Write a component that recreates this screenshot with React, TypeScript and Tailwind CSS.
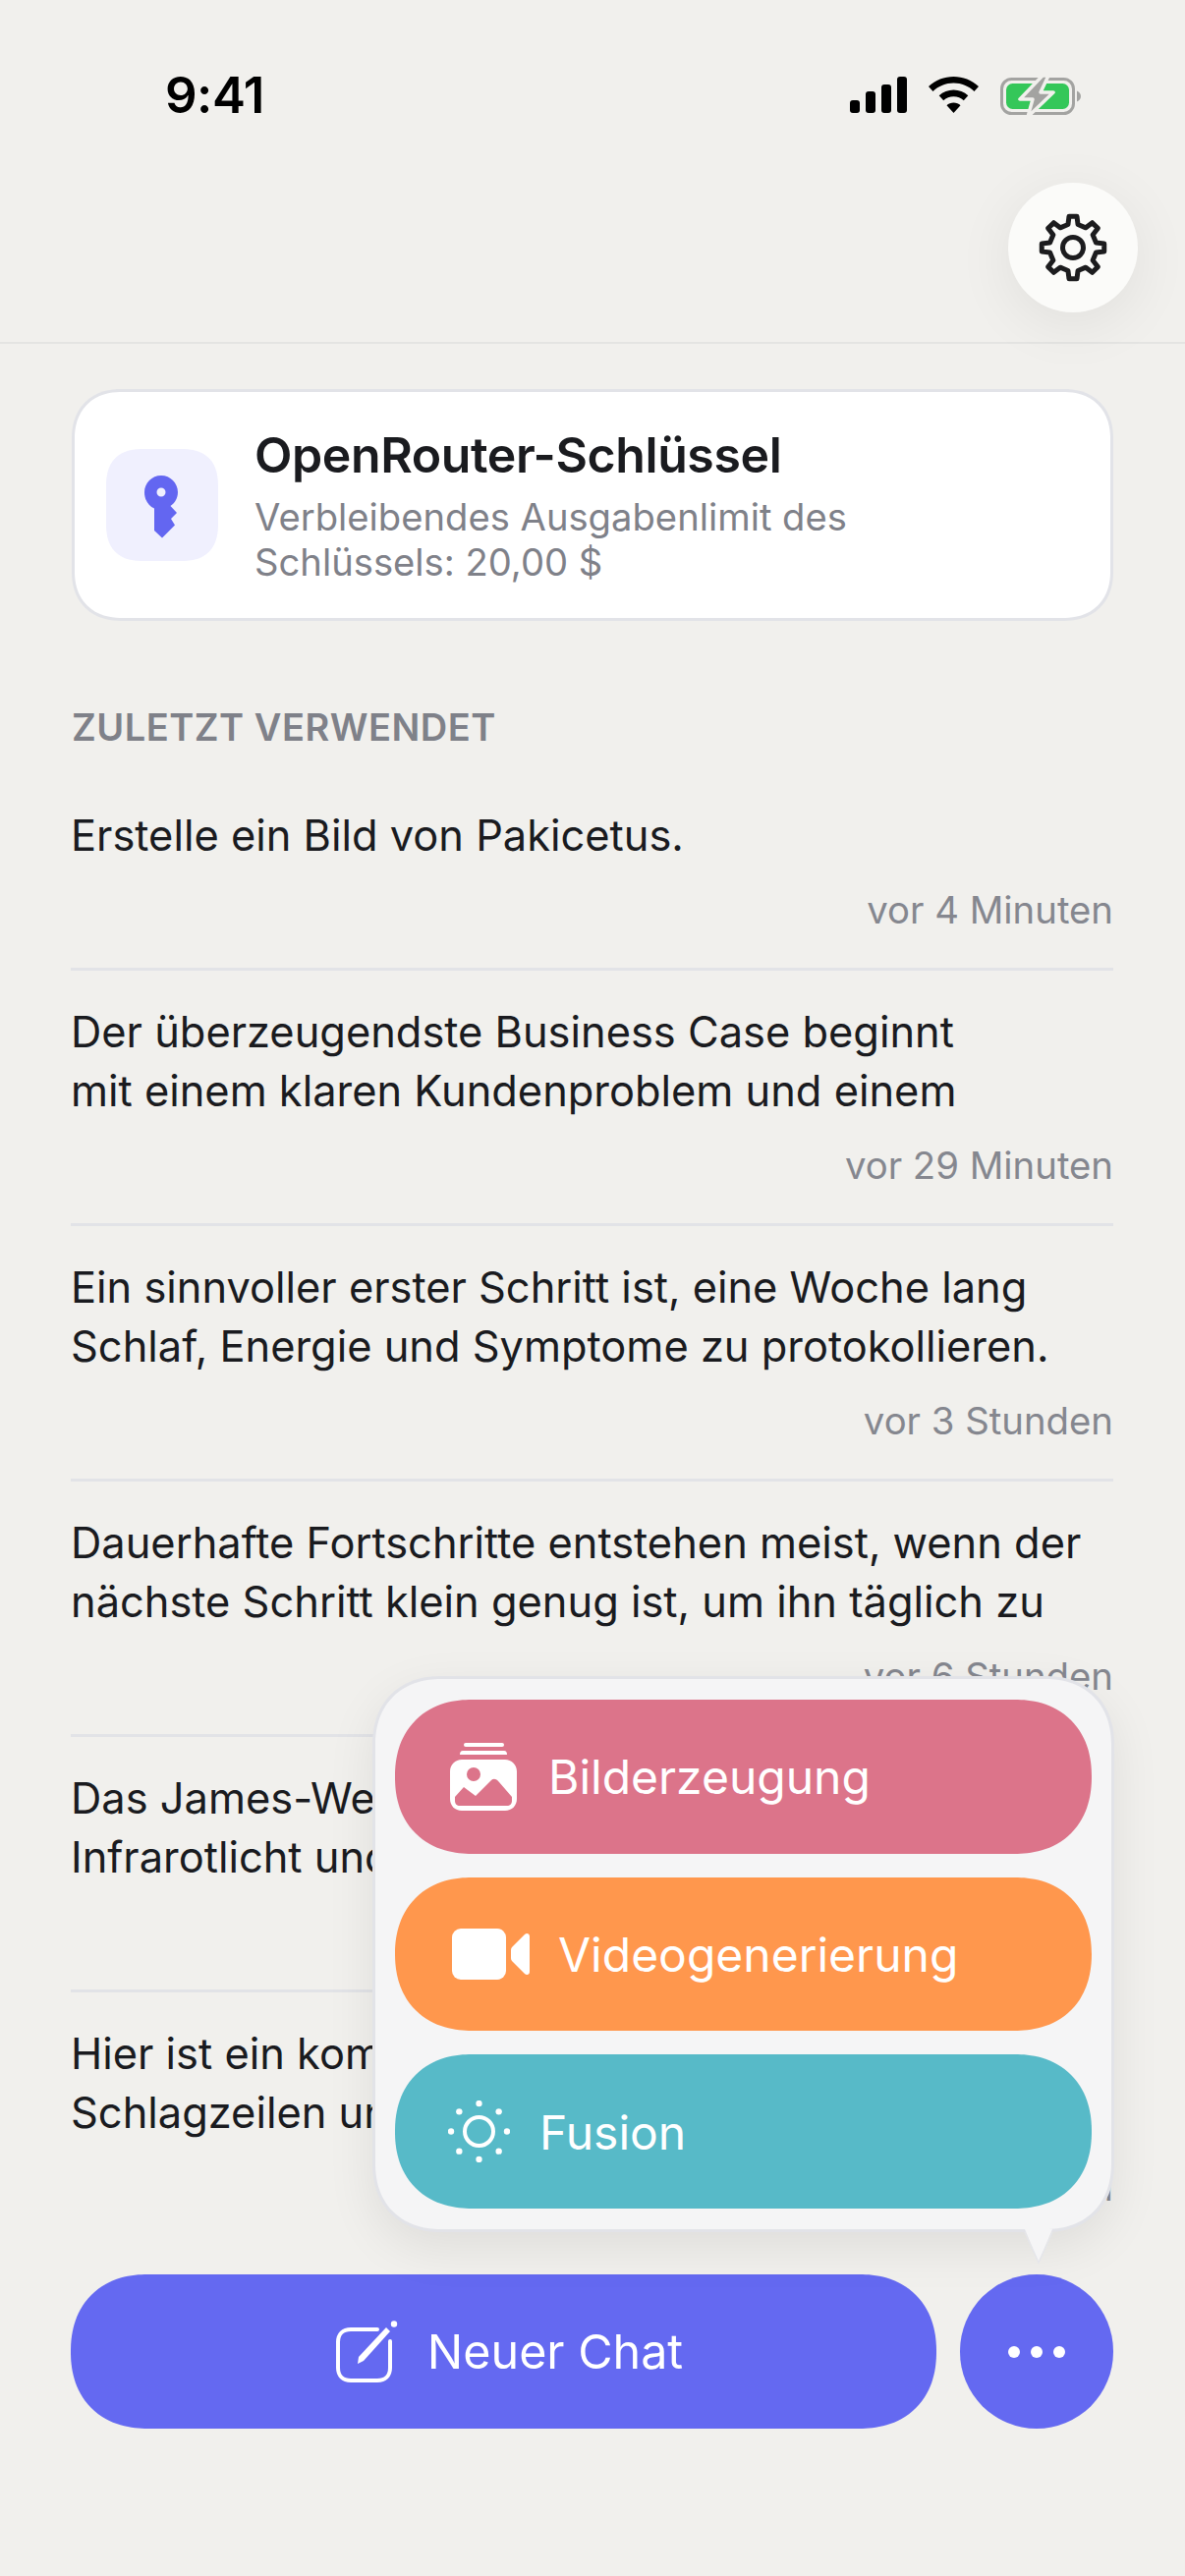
import React from "react";

const rows = [
  { lines: ["Erstelle ein Bild von Pakicetus."], time: "vor 4 Minuten" },
  { lines: ["Der überzeugendste Business Case beginnt", "mit einem klaren Kundenproblem und einem"], time: "vor 29 Minuten" },
  { lines: ["Ein sinnvoller erster Schritt ist, eine Woche lang", "Schlaf, Energie und Symptome zu protokollieren."], time: "vor 3 Stunden" },
  { lines: ["Dauerhafte Fortschritte entstehen meist, wenn der", "nächste Schritt klein genug ist, um ihn täglich zu"], time: "vor 6 Stunden" },
  { lines: ["Das James-Webb-Teleskop beobachtet das All im", "Infrarotlicht und blickt so weit zurück in die Zeit"], time: "vor 9 Stunden" },
  { lines: ["Hier ist ein kompakter Überblick über die heutigen", "Schlagzeilen und die wichtigsten Entwicklungen"], time: "vor 12 Stunden" },
];

function gearPath() {
  const cx = 40, cy = 40, n = 8;
  const ro = 32, ri = 24;
  const pts: string[] = [];
  for (let i = 0; i < n; i++) {
    const a = (i * 2 * Math.PI) / n - Math.PI / 2;
    const step = (2 * Math.PI) / n;
    const seq: [number, number][] = [
      [ri, a - step * 0.27],
      [ro, a - step * 0.16],
      [ro, a + step * 0.16],
      [ri, a + step * 0.27],
    ];
    for (const [r, t] of seq) pts.push(`${(cx + r * Math.cos(t)).toFixed(2)} ${(cy + r * Math.sin(t)).toFixed(2)}`);
  }
  return "M" + pts.join("L") + "Z";
}

function Signal() {
  return (
    <svg width="58" height="37" viewBox="0 0 58 37" fill="#000">
      <rect x="0" y="24" width="10" height="13" rx="3" />
      <rect x="16" y="15" width="10" height="22" rx="3" />
      <rect x="32" y="8" width="10" height="29" rx="3" />
      <rect x="48" y="0" width="10" height="37" rx="3" />
    </svg>
  );
}

function Wifi() {
  return (
    <svg width="51" height="37" viewBox="0 0 51 37" fill="#000">
      <path d="M25.5 0C35 0 44 3.600 51 10L46.500 15C40.800 9.700 33.400 6.600 25.500 6.600C17.600 6.600 10.200 9.700 4.500 15L0 10C7 3.600 16 0 25.500 0Z" />
      <path d="M25.500 13.500C31 13.500 36.300 15.600 40.300 19.300L35.800 24.200C33 21.700 29.400 20.200 25.500 20.200C21.600 20.200 18 21.700 15.200 24.200L10.700 19.300C14.700 15.600 20 13.500 25.500 13.500Z" />
      <path d="M25.500 26.500C28.300 26.500 30.700 27.500 32.500 29.200L25.500 37L18.500 29.200C20.300 27.500 22.700 26.500 25.500 26.500Z" />
    </svg>
  );
}

function Battery() {
  return (
    <svg width="82" height="40" viewBox="0 0 82 40">
      <rect x="1.500" y="2.500" width="73" height="35" rx="10" fill="none" stroke="#a3a3a1" strokeWidth="3" />
      <rect x="6" y="7" width="64" height="26" rx="6.500" fill="#34c759" />
      <path d="M78 14.500C80.500 15.500 82 17.500 82 20C82 22.500 80.500 24.500 78 25.500Z" fill="#a3a3a1" />
      <path d="M43 -1L20 23H33L28 41L54 16H41L49 -1Z" fill="#a3a3a1" stroke="#f1f0ed" strokeWidth="3.500" strokeLinejoin="round" />
    </svg>
  );
}

function Gear() {
  return (
    <svg width="80" height="80" viewBox="0 0 80 80" fill="none" stroke="#1c1c1e" strokeWidth="5" strokeLinejoin="round">
      <path d={gearPath()} />
      <circle cx="40" cy="40" r="10.500" />
    </svg>
  );
}

function KeyIcon() {
  return (
    <svg className="mt-[5px]" width="36" height="66" viewBox="0 0 36 66" fill="#6366f1">
      <path fillRule="evenodd" d="M17 0C26.400 0 34 7.600 34 17C34 23 31 28 26.500 31L33 38L27 44L31 50.500L18 63.500L10 56V33.500C4 31 0 24.500 0 17C0 7.600 7.600 0 17 0ZM17 12.500A4.500 4.500 0 1 0 17 21.500A4.500 4.500 0 1 0 17 12.500Z" />
    </svg>
  );
}

function ImagesIcon() {
  return (
    <svg width="68" height="71" viewBox="0 0 68 71" fill="#fff">
      <rect x="14" y="1" width="41" height="4" rx="2" />
      <path d="M10 13C10 10.500 11 9 13 9H55C57 9 58 10.500 58 13Z" />
      <path
        fillRule="evenodd"
        d="M12 18H56C62.600 18 68 23.400 68 30V58C68 65 63 70 56 70H12C5 70 0 65 0 58V30C0 23.400 5.400 18 12 18ZM24 26A7 7 0 1 0 24 40A7 7 0 1 0 24 26ZM42 39L26 55L14 46L5 56V60C5 63 7 65 10 65H58C61 65 63 63 63 60V56L50 41C47 37 44 37 42 39Z"
      />
    </svg>
  );
}

function VideoIcon() {
  return (
    <svg width="79" height="52" viewBox="0 0 79 52" fill="#fff">
      <rect x="0" y="0" width="55" height="52" rx="9" />
      <path d="M60 22C60 20.500 60.500 19.500 61.500 18.500L74 6C76 4 79 5 79 8V44C79 47 76 48 74 46L61.500 33.500C60.500 32.500 60 31.500 60 30Z" />
    </svg>
  );
}

function SunIcon() {
  const dots = [0, 45, 90, 135, 180, 225, 270, 315];
  return (
    <svg width="63" height="63" viewBox="0 0 63 63" fill="#fff">
      <circle cx="31.500" cy="31.500" r="14.500" fill="none" stroke="#fff" strokeWidth="4" />
      {dots.map((d) => (
        <circle
          key={d}
          cx={31.5 + 28.5 * Math.cos((d * Math.PI) / 180)}
          cy={31.5 + 28.5 * Math.sin((d * Math.PI) / 180)}
          r="3.200"
        />
      ))}
    </svg>
  );
}

function ComposeIcon() {
  return (
    <svg width="63" height="64" viewBox="0 0 63 64" fill="none" stroke="#fff">
      <path d="M42 9H15C7 9 2 14 2 22V48C2 56 7 61 15 61H42C50 61 55 56 55 48V21" strokeWidth="4" strokeLinecap="round" />
      <path d="M22 44L23 37L51 7L55 11L28 41Z" fill="#fff" stroke="none" />
      <circle cx="59" cy="3.500" r="3.200" fill="#fff" stroke="none" />
    </svg>
  );
}

function DotsIcon() {
  return (
    <svg width="58" height="12" viewBox="0 0 58 12" fill="#fff">
      <circle cx="6" cy="6" r="6" />
      <circle cx="29" cy="6" r="6" />
      <circle cx="52" cy="6" r="6" />
    </svg>
  );
}

export default function App() {
  return (
    <div className="relative flex h-[2622px] w-[1206px] flex-col overflow-hidden bg-[#f1f0ed] font-['Inter','Noto_Sans',sans-serif] text-[#1a1b1f]">
      <header className="h-[350px] shrink-0 border-b-[2px] border-[#e4e4e2]">
        <div className="flex h-[186px] items-start justify-between pl-[168px] pr-[106px] pt-[66px]">
          <span className="text-[51px] font-semibold leading-[62px] tracking-[-0.5px] text-black">9:41</span>
          <div className="flex items-start gap-[22px] pt-[12px]">
            <Signal />
            <Wifi />
            <Battery />
          </div>
        </div>
        <div className="flex justify-end pr-[48px]">
          <button className="flex h-[132px] w-[132px] items-center justify-center rounded-full bg-[#fbfbf9] shadow-[0_12px_60px_rgba(0,0,0,0.07)]">
            <Gear />
          </button>
        </div>
      </header>

      <main className="min-h-0 flex-1 overflow-hidden pl-[72px] pr-[73px] pt-[46px]">
        <section className="ml-[1px] flex h-[236px] items-center gap-[37px] rounded-[50px] border-[3px] border-[#e2e3e8] bg-white pl-[32px] [corner-shape:superellipse(1.15)]">
          <div className="flex h-[114px] w-[114px] shrink-0 items-center justify-center rounded-[38px] bg-[#f0f0fe] [corner-shape:superellipse(1.3)]">
            <KeyIcon />
          </div>
          <div>
            <h2 className="text-[50px] font-semibold leading-[58px] tracking-[-0.4px] text-[#1a1b1f]">OpenRouter-Schlüssel</h2>
            <p className="mt-[11px] text-[38.2px] leading-[46px] text-[#7f8189]">
              Verbleibendes Ausgabenlimit des
              <br />
              Schlüssels: 20,00 $
            </p>
          </div>
        </section>

        <h3 className="ml-[1px] mt-[83px] text-[38px] font-semibold leading-[50px] tracking-[0.5px] text-[#7f8189]">ZULETZT VERWENDET</h3>

        <ul className="mt-[23px]">
          {rows.map((r, i) => (
            <li key={i} className={i < rows.length - 1 ? "border-b-[3px] border-[#e2e3e7] pb-[35px] pt-[32px]" : "pb-[35px] pt-[32px]"}>
              <p className="text-[43.4px] leading-[60px]">
                {r.lines.map((l) => (
                  <span key={l} className="block whitespace-nowrap">
                    {l}
                  </span>
                ))}
              </p>
              <p className="mt-[22px] text-right text-[38.3px] leading-[48px] text-[#85878f]">{r.time}</p>
            </li>
          ))}
        </ul>
      </main>

      <footer className="flex h-[307px] shrink-0 items-start gap-[24px] pl-[72px] pr-[73px]">
        <button className="flex h-[157px] flex-1 items-center justify-center gap-[30px] rounded-[78px] bg-[#6469f1] pl-[12px] text-[48.4px] leading-none text-white [corner-shape:superellipse(1.15)]">
          <ComposeIcon />
          <span className="pt-[2px]">Neuer Chat</span>
        </button>
        <button className="flex h-[157px] w-[156px] items-center justify-center rounded-full bg-[#6469f1]">
          <DotsIcon />
        </button>
      </footer>

      <div className="absolute bottom-[350px] right-[72px] flex h-[566px] w-[755px] flex-col gap-[24px] rounded-[70px] border-[3px] border-[#e2e3e8] bg-[#f5f5f6] px-[20px] py-[21px] shadow-[0_16px_50px_rgba(0,0,0,0.08)] [corner-shape:superellipse(1.15)]">
        <button className="flex h-[157px] items-center gap-[32px] rounded-[78px] bg-[#dc748a] pl-[56px] text-[48px] leading-none text-white [corner-shape:superellipse(1.15)]">
          <ImagesIcon />
          <span className="pt-[2px]">Bilderzeugung</span>
        </button>
        <button className="flex h-[157px] items-center gap-[29px] rounded-[78px] bg-[#ff974d] pl-[58px] text-[48px] leading-none text-white [corner-shape:superellipse(1.15)]">
          <VideoIcon />
          <span className="pt-[2px]">Videogenerierung</span>
        </button>
        <button className="flex h-[157px] items-center gap-[30px] rounded-[78px] bg-[#57bac8] pl-[54px] text-[48px] leading-none text-white [corner-shape:superellipse(1.15)]">
          <SunIcon />
          <span className="pt-[2px]">Fusion</span>
        </button>
        <svg className="absolute left-[660px] top-[560px]" width="30" height="36" viewBox="0 0 30 36" fill="#f5f5f6">
          <path d="M1 0L15 34L29 0Z" />
          <path d="M1 3L15 34L29 3" fill="none" stroke="#e5e6ea" strokeWidth="1.500" />
        </svg>
      </div>
    </div>
  );
}
